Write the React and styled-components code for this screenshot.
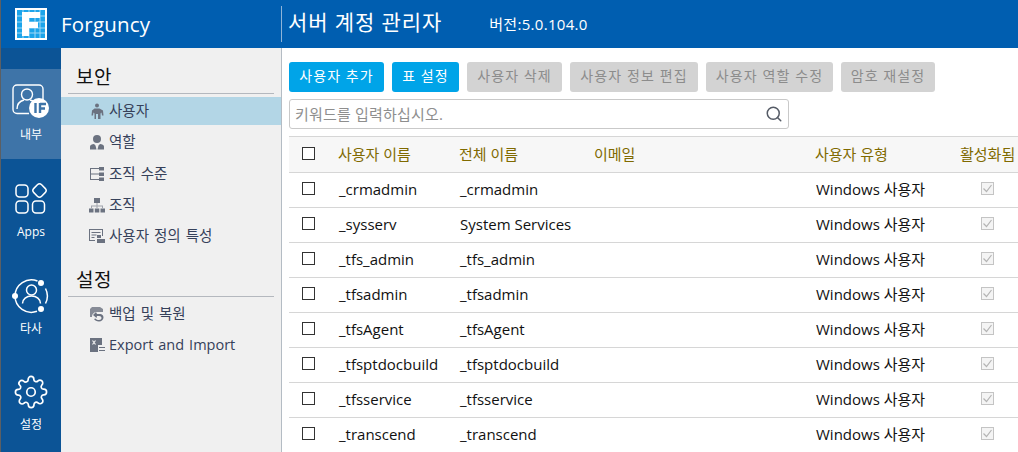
import React from "react";
import styled, { createGlobalStyle } from "styled-components";
import { Search } from "lucide-react";

const FONT = `"Open Sans", "Noto Sans CJK KR", sans-serif`;

const GlobalStyle = createGlobalStyle`
  html, body {
    margin: 0;
    padding: 0;
    height: 100%;
    overflow: hidden;
    background: #fff;
  }
  body {
    font-family: ${FONT};
  }
`;

const Page = styled.div`
  width: 1018px;
  height: 452px;
  display: flex;
  flex-direction: column;
  overflow: hidden;
  border-left: 1px solid #5c5f63;
  box-sizing: border-box;
`;

const Header = styled.header`
  height: 48px;
  flex: none;
  background: #005eb0;
  display: flex;
  align-items: center;
  color: #fff;
`;

const Brand = styled.div`
  width: 281px;
  height: 36px;
  display: flex;
  align-items: center;
  gap: 14px;
  padding-left: 14px;
  box-sizing: border-box;
  border-right: 1px solid #8fb4d8;
  flex: none;
`;

const BrandName = styled.span`
  font-size: 20.5px;
  letter-spacing: 0.2px;
`;

const Title = styled.h1`
  margin: -4px 0 0 6px;
  font-size: 21px;
  line-height: 28px;
  font-weight: 400;
  letter-spacing: 0.9px;
`;

const Version = styled.span`
  margin-left: 47px;
  font-size: 15px;
  line-height: 20px;
  letter-spacing: 0.3px;
`;

const Body = styled.div`
  flex: 1;
  display: flex;
  min-height: 0;
`;

const Rail = styled.nav`
  width: 60px;
  flex: none;
  background: #0c5496;
  padding-top: 21px;
  box-sizing: border-box;
  display: flex;
  flex-direction: column;
`;

const RailItem = styled.div`
  height: ${(p) => p.$h}px;
  flex: none;
  display: flex;
  flex-direction: column;
  align-items: center;
  padding-top: ${(p) => p.$top}px;
  box-sizing: border-box;
  background: ${(p) => (p.$active ? "#3e74a8" : "transparent")};
  color: #fff;
  font-size: 12px;
  line-height: 16px;
  gap: ${(p) => p.$gap}px;
`;

const Sidebar = styled.aside`
  width: 220px;
  flex: none;
  background: #f0f0f0;
  border-right: 1px solid #b4bcc4;
  padding-top: 15px;
`;

const Section = styled.div`
  margin-bottom: 16px;
`;

const SectionTitle = styled.div`
  margin: 0 7px 3px;
  padding: 0 0 0 8px;
  height: 31px;
  box-sizing: border-box;
  border-bottom: 1px solid #b4b8be;
  font-size: 19px;
  line-height: 28px;
  color: #111;
  letter-spacing: 0.5px;
`;

const MenuItem = styled.div`
  height: 28px;
  margin-bottom: ${(p) => (p.$last ? 0 : 3.25)}px;
  padding-left: 28px;
  display: flex;
  align-items: center;
  gap: 4px;
  font-size: 14.5px;
  line-height: 20px;
  word-spacing: 1.2px;
  color: #36415a;
  background: ${(p) => (p.$active ? "#b3d6e6" : "transparent")};
`;

const MenuIcon = styled.svg`
  width: 16px;
  height: 16px;
  flex: none;
  fill: #6b7280;
`;

const Main = styled.main`
  flex: 1;
  min-width: 0;
  padding: 14px 0 0 7px;
  background: #fff;
`;

const Toolbar = styled.div`
  display: flex;
  gap: 8px;
  height: 30px;
`;

const Button = styled.button`
  height: 30px;
  width: ${(p) => p.$w}px;
  padding: 0 0 2px;
  border: 0;
  border-radius: 3px;
  font-family: ${FONT};
  font-size: 14px;
  line-height: 20px;
  letter-spacing: 1.1px;
  background: ${(p) => (p.$disabled ? "#d3d3d3" : "#00a4e8")};
  color: ${(p) => (p.$disabled ? "#8c8c8c" : "#fff")};
`;

const SearchBox = styled.div`
  margin-top: 7px;
  width: 500px;
  height: 30px;
  box-sizing: border-box;
  border: 1px solid #c9c9c9;
  border-radius: 3px;
  display: flex;
  align-items: center;
  justify-content: space-between;
  padding: 0 5px;
  font-size: 15px;
  line-height: 20px;
  letter-spacing: 0.2px;
  color: #8e8e8e;
`;

const Table = styled.div`
  margin-top: 7px;
  width: 740px;
`;

const Row = styled.div`
  display: grid;
  grid-template-columns: 49px 121px 135px 221px 145px 69px;
  height: ${(p) => (p.$head ? 37 : 35)}px;
  box-sizing: border-box;
  align-items: center;
  font-size: 15px;
  line-height: 20px;
  border-bottom: 1px solid #d6d6d6;
  color: ${(p) => (p.$head ? "#806a00" : "#111")};
  background: ${(p) => (p.$head ? "#f7f7f7" : "#fff")};
  border-top: ${(p) => (p.$head ? "1px solid #d6d6d6" : "0")};
`;

const Cell = styled.div`
  white-space: nowrap;
  padding-left: ${(p) => (p.$head ? 0 : 1)}px;
  padding-bottom: 2px;
`;

const Box = styled.span`
  display: block;
  width: 13px;
  height: 13px;
  margin: 0 0 3px 13px;
  box-sizing: border-box;
  border: 1px solid #333;
  background: #fff;
`;

const Checked = styled.svg`
  display: block;
  width: 13px;
  height: 13px;
  margin: 0 0 3px 21px;
`;

const LogoIcon = () => (
  <svg width="32" height="32" viewBox="0 0 32 32">
    <rect width="32" height="32" fill="#fff" />
    <rect x="2" y="2" width="28" height="28" fill="#1ca4ea" />
    <path d="M8 2v28M14 2v28M20 2v28M25 2v28M2 8h28M2 14h28M2 20h28M2 25h28" stroke="#9fd8f6" strokeWidth="1" />
    <path d="M7 4h18v6H14v4h9v6h-9v8H7z" fill="#fff" />
  </svg>
);

const InternalIcon = () => (
  <svg width="38" height="38" viewBox="0 0 38 38" fill="none" stroke="#fff" strokeWidth="1.4">
    <path d="M17 29.5H5a4 4 0 0 1-4-4V5a4 4 0 0 1 4-4h22a4 4 0 0 1 4 4v11" />
    <circle cx="15" cy="10.5" r="5.5" />
    <path d="M5 25c0-5 3-8 7-9M18 16c2 .5 4 1.5 5 2" />
    <circle cx="27" cy="24" r="10" fill="#fff" stroke="none" />
    <path d="M23.5 19v10M28 19v10M28 20h6M28 24.5h5" stroke="#3e74a8" strokeWidth="2.4" />
  </svg>
);

const AppsIcon = () => (
  <svg width="32" height="32" viewBox="0 0 32 32" fill="none" stroke="#fff" strokeWidth="1.5">
    <rect x="1" y="3" width="12" height="12" rx="3.5" />
    <rect x="19" y="3" width="11" height="11" rx="3" transform="rotate(45 24.5 8.5)" />
    <rect x="1" y="19" width="12" height="12" rx="3.5" />
    <rect x="17.5" y="19" width="12" height="12" rx="3.5" />
  </svg>
);

const ThirdPartyIcon = () => (
  <svg width="38" height="38" viewBox="0 0 38 38" fill="none" stroke="#fff" strokeWidth="1.5">
    <path d="M3 19A16.4 16.4 0 0 1 25.5 4M33.5 11.5a16.4 16.4 0 0 1 0 15M25 34.3A16.4 16.4 0 0 1 3 19" />
    <circle cx="19.5" cy="13" r="5" />
    <path d="M10.5 26.5c0-4.5 4-7.5 9-7.500s9 3 9 7.5" />
    <circle cx="29" cy="6" r="3" fill="#fff" stroke="none" />
    <circle cx="3" cy="19" r="3" fill="#fff" stroke="none" />
    <circle cx="29" cy="32" r="3" fill="#fff" stroke="none" />
  </svg>
);

const GearIcon = () => (
  <svg width="34" height="34" viewBox="0 0 24 24" fill="none" stroke="#fff" strokeWidth="1.2" strokeLinejoin="round">
    <circle cx="12" cy="12" r="3" />
    <path d="M19.4 15a1.65 1.65 0 0 0 .33 1.82l.06.06a2 2 0 1 1-2.83 2.83l-.06-.06a1.65 1.65 0 0 0-2.8 1.17V21a2 2 0 0 1-4 0v-.09a1.65 1.65 0 0 0-2.9-1.08l-.06.06a2 2 0 1 1-2.83-2.83l.06-.06a1.65 1.65 0 0 0-1.17-2.8H3a2 2 0 0 1 0-4h.09a1.65 1.65 0 0 0 1.08-2.9l-.06-.06a2 2 0 1 1 2.83-2.83l.06.06a1.65 1.65 0 0 0 1.82.33H9a1.65 1.65 0 0 0 1-1.51V3a2 2 0 0 1 4 0v.09a1.65 1.65 0 0 0 2.8 1.17l.06-.06a2 2 0 1 1 2.83 2.83l-.06.06a1.65 1.65 0 0 0-.33 1.82V9a1.65 1.65 0 0 0 1.51 1H21a2 2 0 0 1 0 4h-.09a1.65 1.65 0 0 0-1.51 1z" />
  </svg>
);

const menuPaths = {
  users: (
    <>
      <circle cx="8" cy="2.5" r="2" />
      <path d="M5.5 5.5h5l3.5 2 .5 5h-1.500l-.5-3-1 1V16H9V11H7v5H5.5v-5.500l-1-1-.5 3H2.500l.5-5z" />
    </>
  ),
  role: (
    <>
      <circle cx="8" cy="5" r="4" />
      <path d="M1 15.5v-3c0-1.500 2-2.500 4-2.500l1.500 1.500L7.500 15.500zM15 15.500v-3c0-1.500-2-2.500-4-2.500l-1.500 1.500-1 4z" />
    </>
  ),
  level: (
    <>
      <path d="M1 2h14v1H2v4.500h13v1H2V13h13v1H1z" />
      <rect x="10" y="1" width="5" height="3.5" />
      <rect x="10" y="6.5" width="5" height="3.5" />
      <rect x="10" y="11.5" width="5" height="3.5" />
    </>
  ),
  org: (
    <>
      <rect x="5" y="1" width="6" height="5" />
      <path d="M7.5 6h1v2.500H14V11h-1V9.500H8.500V11h-1V9.500H3V11H2V8.500h5.500z" opacity=".6" />
      <rect x="0" y="11.5" width="4.5" height="4" />
      <rect x="5.8" y="11.5" width="4.5" height="4" />
      <rect x="11.5" y="11.5" width="4.5" height="4" />
    </>
  ),
  custom: (
    <>
      <path d="M0 1h14v7h-1V2H1v10h5v1H0z" />
      <path d="M2.5 4h9v1h-9zM2.500 6.500h5v1h-5zM2.500 9h3v1h-3z" />
      <rect x="8" y="7" width="4" height="3" />
      <rect x="8" y="11" width="8" height="4" />
    </>
  ),
  backup: (
    <>
      <path d="M3 1h8l3 2v3H8c-3 0-5 2-5 5H1V3z" opacity=".8" />
      <path d="M4 9l3-3 1 2h3c2 0 3.500 1.500 3.500 3.500S12.500 15.500 10 15.500c-2.500 0-4-1-5-2.500l1.500-.5c1 1 2 1.500 3.500 1.500s2.500-.8 2.500-2-1-2-2.500-2H8l-.5 2z" />
    </>
  ),
  export: (
    <>
      <path d="M1 1h12v7H9v7H1z" />
      <path d="M3.5 3.5l3 4M6.5 3.5l-3 4" stroke="#f0f0f0" strokeWidth="1.2" fill="none" />
      <path d="M10 10h6v1h-6zM10 13h6v1h-6z" />
    </>
  ),
};

const MenuEntry = ({ icon, label, active, last }) => (
  <MenuItem $active={active} $last={last}>
    <MenuIcon viewBox="0 0 16 16">{menuPaths[icon]}</MenuIcon>
    <span>{label}</span>
  </MenuItem>
);

const BUTTONS = [
  { label: "사용자 추가", w: 95 },
  { label: "표 설정", w: 67 },
  { label: "사용자 삭제", w: 95, disabled: true },
  { label: "사용자 정보 편집", w: 128, disabled: true },
  { label: "사용자 역할 수정", w: 127, disabled: true },
  { label: "암호 재설정", w: 94, disabled: true },
];

const USERS = [
  ["_crmadmin", "_crmadmin"],
  ["_sysserv", "System Services"],
  ["_tfs_admin", "_tfs_admin"],
  ["_tfsadmin", "_tfsadmin"],
  ["_tfsAgent", "_tfsAgent"],
  ["_tfsptdocbuild", "_tfsptdocbuild"],
  ["_tfsservice", "_tfsservice"],
  ["_transcend", "_transcend"],
];

const App = () => (
  <Page>
    <GlobalStyle />
    <Header>
      <Brand>
        <LogoIcon />
        <BrandName>Forguncy</BrandName>
      </Brand>
      <Title>서버 계정 관리자</Title>
      <Version>버전:5.0.104.0</Version>
    </Header>
    <Body>
      <Rail>
        <RailItem $active $h={90} $top={15} $gap={5}>
          <InternalIcon />
          내부
        </RailItem>
        <RailItem $h={97} $top={23} $gap={10}>
          <AppsIcon />
          Apps
        </RailItem>
        <RailItem $h={96} $top={21} $gap={6}>
          <ThirdPartyIcon />
          타사
        </RailItem>
        <RailItem $h={100} $top={23} $gap={8}>
          <GearIcon />
          설정
        </RailItem>
      </Rail>
      <Sidebar>
        <Section>
          <SectionTitle>보안</SectionTitle>
          <MenuEntry icon="users" label="사용자" active />
          <MenuEntry icon="role" label="역할" />
          <MenuEntry icon="level" label="조직 수준" />
          <MenuEntry icon="org" label="조직" />
          <MenuEntry icon="custom" label="사용자 정의 특성" last />
        </Section>
        <Section>
          <SectionTitle>설정</SectionTitle>
          <MenuEntry icon="backup" label="백업 및 복원" />
          <MenuEntry icon="export" label="Export and Import" last />
        </Section>
      </Sidebar>
      <Main>
        <Toolbar>
          {BUTTONS.map((b) => (
            <Button key={b.label} $w={b.w} $disabled={b.disabled}>
              {b.label}
            </Button>
          ))}
        </Toolbar>
        <SearchBox>
          <span>키워드를 입력하십시오.</span>
          <Search size={18} color="#555b66" strokeWidth={2} />
        </SearchBox>
        <Table>
          <Row $head>
            <Box />
            <Cell $head>사용자 이름</Cell>
            <Cell $head>전체 이름</Cell>
            <Cell $head>이메일</Cell>
            <Cell $head>사용자 유형</Cell>
            <Cell $head>활성화됨</Cell>
          </Row>
          {USERS.map(([name, full]) => (
            <Row key={name}>
              <Box />
              <Cell>{name}</Cell>
              <Cell>{full}</Cell>
              <Cell />
              <Cell>Windows 사용자</Cell>
              <Checked viewBox="0 0 13 13">
                <rect x="0.5" y="0.5" width="12" height="12" fill="#f4f4f4" stroke="#c4c4c4" />
                <path d="M2.5 6.500l3 3 5-6.500" fill="none" stroke="#b4b4b4" strokeWidth="1.2" />
              </Checked>
            </Row>
          ))}
        </Table>
      </Main>
    </Body>
  </Page>
);

export default App;
